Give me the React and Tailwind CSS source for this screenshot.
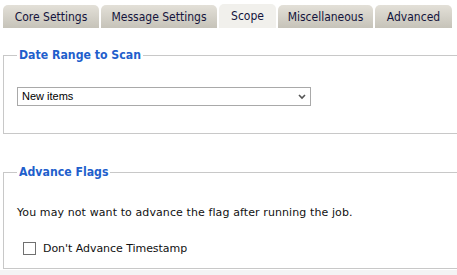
export default function App() {
  const tabs = [
    { label: "Core Settings", w: "w-[96px]" },
    { label: "Message Settings", w: "w-[116px]" },
    { label: "Scope", w: "w-[57px]", active: true },
    { label: "Miscellaneous", w: "w-[95px]" },
    { label: "Advanced", w: "w-[77px]" },
  ];
  return (
    <div className="w-[457px] h-[275px] overflow-hidden bg-[#f4f4f4] font-['DejaVu_Sans',sans-serif]">
      <div className="bg-white h-[270px]">
        <div className="flex items-end h-[28px] pl-[3px] gap-[2px]">
          {tabs.map((t) => (
            <div
              key={t.label}
              className={
                "h-[23px] rounded-t-[5px] flex items-center justify-center text-[12px] text-[#14143c] font-['DejaVu_Sans_Condensed',sans-serif] " +
                t.w +
                " " +
                (t.active
                  ? "h-[24px] bg-[#f1f0ec]"
                  : "bg-gradient-to-b from-[#e3e0d8] to-[#c6c3b9]")
              }
            >
              {t.label}
            </div>
          ))}
        </div>
        <div className="pl-[3px]">
          <fieldset className="mt-[19px] w-[460px] border border-[#c8c8c8] pl-[13px] pb-[27px]">
            <legend className="px-[2px] text-[12.2px] leading-[16px] font-bold text-[#1f5fcc] font-['DejaVu_Sans_Condensed',sans-serif]">
              Date Range to Scan
            </legend>
            <div className="mt-[24px] w-[294px] h-[19px] border border-[#a9a9a9] bg-white flex items-center justify-between pl-[4px] pr-[4px]">
              <span className="text-[11px] text-black font-['Liberation_Sans',sans-serif]">New items</span>
              <svg width="8" height="6" viewBox="0 0 8 6">
                <path d="M1 1 L4 4 L7 1" stroke="#555" strokeWidth="1.6" fill="none" />
              </svg>
            </div>
          </fieldset>
          <fieldset className="mt-[30px] w-[460px] h-[105px] border border-[#c8c8c8] pl-[13px]">
            <legend className="px-[2px] text-[12.2px] leading-[16px] font-bold text-[#1f5fcc] font-['DejaVu_Sans_Condensed',sans-serif]">
              Advance Flags
            </legend>
            <div className="mt-[25px] text-[11px] leading-[15px] tracking-[0.1px] text-[#111]">
              You may not want to advance the flag after running the job.
            </div>
            <div className="mt-[21px] ml-[6px] flex items-center gap-[7px]">
              <div className="w-[13px] h-[13px] border border-[#707070] bg-white" />
              <span className="text-[11px] leading-[15px] tracking-[-0.05px] text-[#111]">Don't Advance Timestamp</span>
            </div>
          </fieldset>
        </div>
      </div>
    </div>
  );
}
